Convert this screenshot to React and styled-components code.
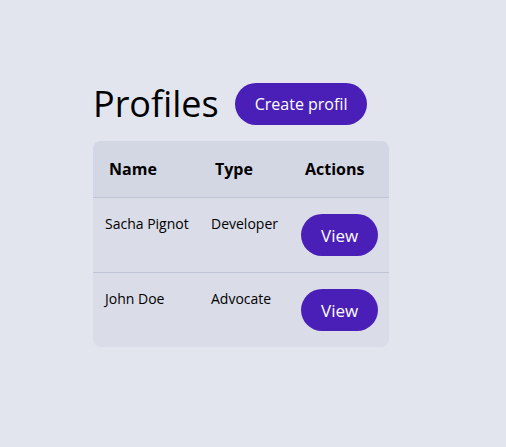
import React from 'react'
import styled, { createGlobalStyle } from 'styled-components'

const Global = createGlobalStyle`
  body {
    margin: 0;
    background: #e2e5ee;
    font-family: "Open Sans", "Noto Sans", sans-serif;
    color: #000;
  }
`;

const Page = styled.div`
  width: 506px;
  height: 447px;
  box-sizing: border-box;
  padding: 80px 0 0 93px;
`;

const Header = styled.div`
  display: flex;
  align-items: center;
  gap: 16px;
  margin-bottom: 13px;
`;

const Title = styled.h1`
  margin: 0;
  font-size: 36px;
  font-weight: 400;
  line-height: 48px;
`;

const PillButton = styled.button`
  border: none;
  border-radius: 999px;
  background: #4a1fb8;
  color: #fff;
  font-family: inherit;
  font-size: ${p => p.$size || 16}px;
  height: 42px;
  padding: 0 ${p => p.$pad || 20}px;
  cursor: pointer;
`;

const Table = styled.table`
  border-collapse: separate;
  border-spacing: 0;
  table-layout: fixed;
  width: 296px;
  border-radius: 8px;
  overflow: hidden;
  background: #dadce8;
`;

const Th = styled.th`
  text-align: left;
  font-size: 16px;
  font-weight: 700;
  line-height: 24px;
  padding: 16px;
  background: #d3d6e3;
  width: ${p => p.$w}px;
  box-sizing: border-box;
`;

const Td = styled.td`
  font-size: 14px;
  line-height: 20px;
  padding: 16px 12px;
  vertical-align: top;
  white-space: nowrap;
  border-top: 1px solid #bfc3d6;
`;

const rows = [
  { name: 'Sacha Pignot', type: 'Developer' },
  { name: 'John Doe', type: 'Advocate' },
]

export default function App() {
  return (
    <Page>
      <Global />
      <Header>
        <Title>Profiles</Title>
        <PillButton>Create profil</PillButton>
      </Header>
      <Table>
        <thead>
          <tr>
            <Th $w={106}>Name</Th>
            <Th $w={90}>Type</Th>
            <Th $w={100}>Actions</Th>
          </tr>
        </thead>
        <tbody>
          {rows.map(r => (
            <tr key={r.name}>
              <Td>{r.name}</Td>
              <Td>{r.type}</Td>
              <Td><PillButton $pad={20} $size={17}>View</PillButton></Td>
            </tr>
          ))}
        </tbody>
      </Table>
    </Page>
  )
}
